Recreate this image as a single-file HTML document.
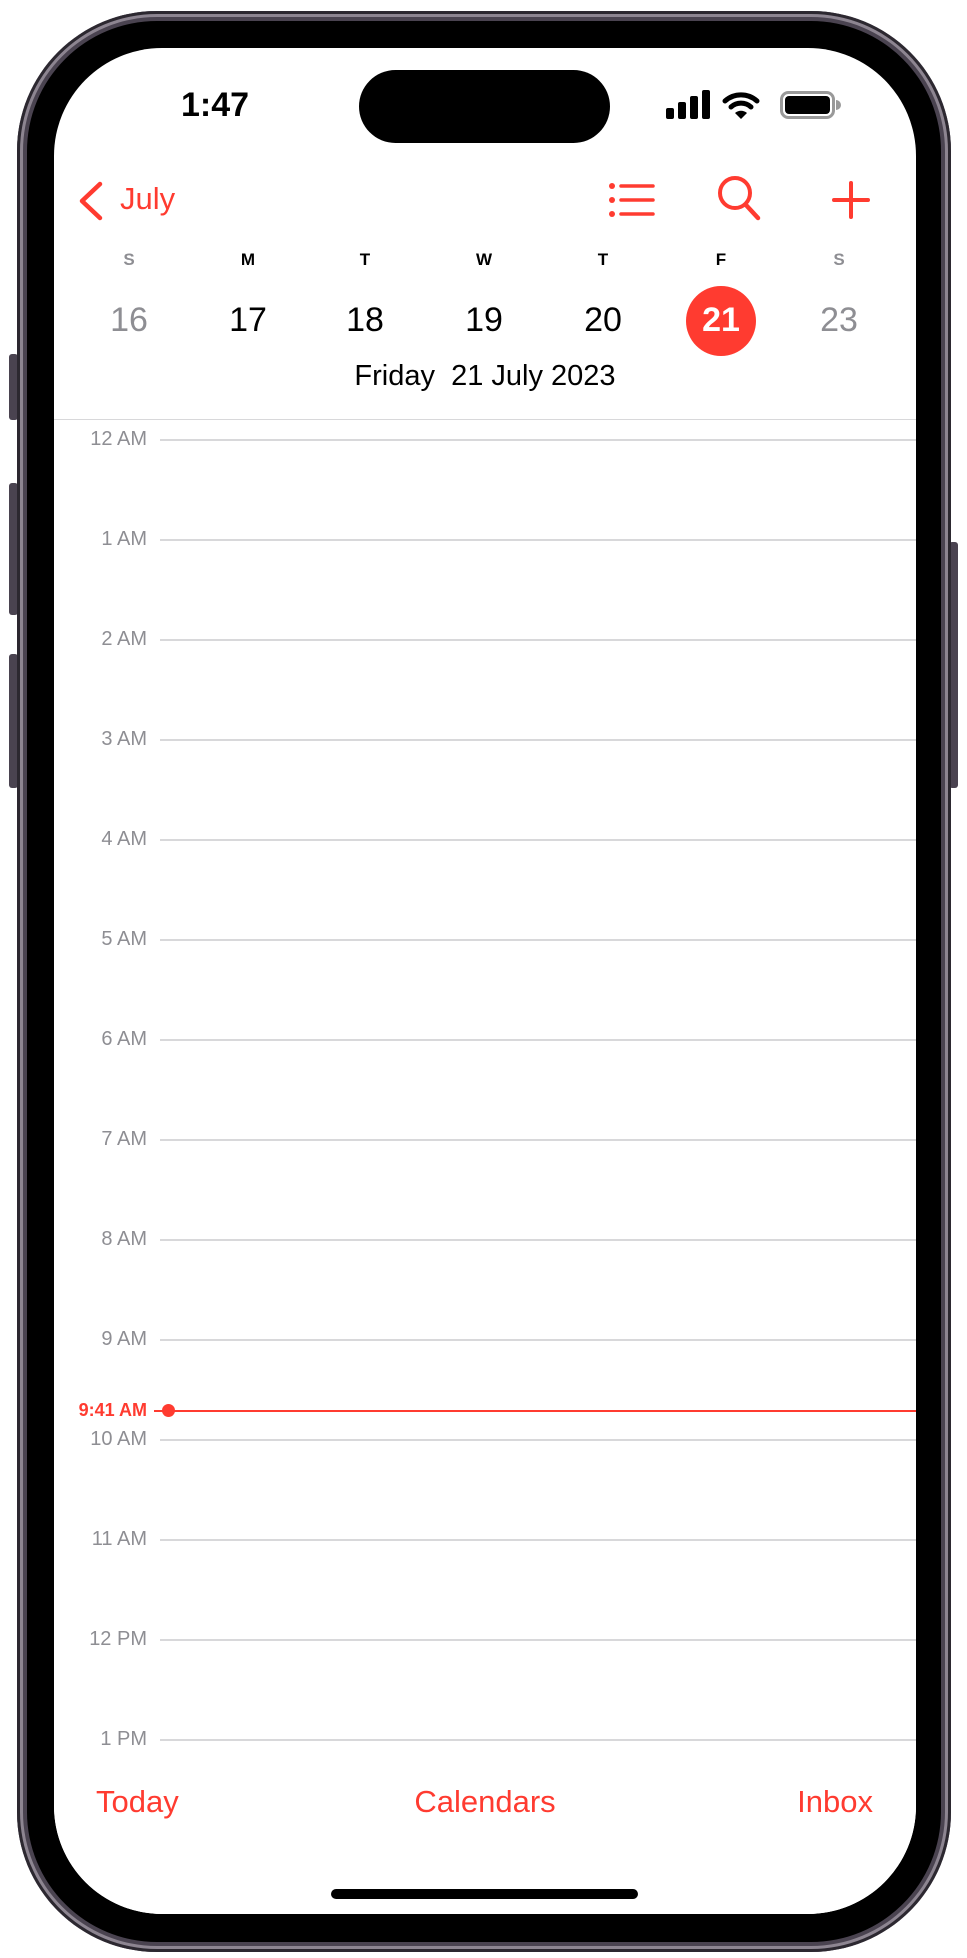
<!DOCTYPE html>
<html><head><meta charset="utf-8"><style>
*{margin:0;padding:0;box-sizing:border-box}
body{width:967px;height:1958px;background:#fff;position:relative;overflow:hidden;font-family:"Liberation Sans",sans-serif}
.abs{position:absolute}
.phone{left:17px;top:11px;width:934px;height:1941px;border-radius:140px;background:#4a4350;box-shadow:inset 0 0 0 3px #2c2830,inset 0 0 0 6px #8d8591}
.bezel{left:27px;top:21px;width:914px;height:1921px;border-radius:130px;background:#000}
.screen{left:54px;top:48px;width:862px;height:1866px;border-radius:108px;background:#fff;overflow:hidden}
.red{color:#ff3b30}
.hl{position:absolute;left:106px;right:0;height:2px;background:#d8d8da}
.lab{position:absolute;right:769px;font-size:20px;color:#8e8e93;text-align:right;white-space:nowrap}
.wd{position:absolute;width:80px;text-align:center;font-size:17px;font-weight:bold;top:202px}
.dn{position:absolute;width:80px;text-align:center;font-size:34px;top:253px}
.btn{background:#4a4350;border-radius:3px}
</style></head><body>
<div class="abs btn" style="left:9px;top:354px;width:9px;height:66px"></div>
<div class="abs btn" style="left:9px;top:483px;width:9px;height:132px"></div>
<div class="abs btn" style="left:9px;top:654px;width:9px;height:134px"></div>
<div class="abs btn" style="left:949px;top:542px;width:9px;height:246px"></div>
<div class="abs phone"></div>
<div class="abs bezel"></div>
<div class="abs screen">
  <div class="abs" style="left:127px;top:38px;font-size:34px;font-weight:bold;color:#000">1:47</div>
  <div class="abs" style="left:305px;top:22px;width:251px;height:73px;border-radius:37px;background:#000"></div>
  <svg class="abs" style="left:610px;top:40px" width="190" height="34" viewBox="0 0 190 34">
    <rect x="2" y="20" width="8" height="11" rx="2"/><rect x="14" y="14" width="8" height="17" rx="2"/><rect x="26" y="8" width="8" height="23" rx="2"/><rect x="38" y="2" width="8" height="29" rx="2"/>
    <path d="M61 13a24 24 0 0 1 32 0" stroke="#000" stroke-width="5" fill="none" stroke-linecap="round"/>
    <path d="M67 19a15 15 0 0 1 20 0" stroke="#000" stroke-width="5" fill="none" stroke-linecap="round"/>
    <path d="M77 31l-6-6a9 9 0 0 1 12 0z"/>
    <rect x="117.5" y="4.5" width="52" height="25" rx="7" fill="none" stroke="#999" stroke-width="3"/>
    <rect x="121" y="8" width="45" height="18" rx="4"/>
    <path d="M172 12v10a4 4 0 0 0 0-10z" fill="#999"/>
  </svg>
  <svg class="abs" style="left:22px;top:132px" width="30" height="42" viewBox="0 0 30 42"><path d="M24 4L6 21l18 17" stroke="#ff3b30" stroke-width="4.5" fill="none" stroke-linecap="round" stroke-linejoin="round"/></svg>
  <div class="abs red" style="left:66px;top:133px;font-size:31px">July</div>
  <svg class="abs" style="left:554px;top:130px" width="48" height="44" viewBox="0 0 48 44"><g fill="#ff3b30"><circle cx="4" cy="8" r="3"/><circle cx="4" cy="22" r="3"/><circle cx="4" cy="36" r="3"/></g><g stroke="#ff3b30" stroke-width="3.5" stroke-linecap="round"><path d="M13 8h32M13 22h32M13 36h32"/></g></svg>
  <svg class="abs" style="left:662px;top:126px" width="48" height="50" viewBox="0 0 48 50"><circle cx="19" cy="19" r="15" stroke="#ff3b30" stroke-width="4" fill="none"/><path d="M30 31l12 13" stroke="#ff3b30" stroke-width="4.5" stroke-linecap="round"/></svg>
  <svg class="abs" style="left:777px;top:132px" width="40" height="40" viewBox="0 0 40 40"><path d="M20 3v34M3 20h34" stroke="#ff3b30" stroke-width="4" stroke-linecap="round"/></svg>
  <div class="wd" style="left:35px;color:#8e8e93">S</div>
  <div class="wd" style="left:154px">M</div>
  <div class="wd" style="left:271px">T</div>
  <div class="wd" style="left:390px">W</div>
  <div class="wd" style="left:509px">T</div>
  <div class="wd" style="left:627px">F</div>
  <div class="wd" style="left:745px;color:#8e8e93">S</div>
  <div class="abs" style="left:632px;top:238px;width:70px;height:70px;border-radius:50%;background:#ff3b30"></div>
  <div class="dn" style="left:35px;color:#8e8e93">16</div>
  <div class="dn" style="left:154px">17</div>
  <div class="dn" style="left:271px">18</div>
  <div class="dn" style="left:390px">19</div>
  <div class="dn" style="left:509px">20</div>
  <div class="dn" style="left:627px;color:#fff;font-weight:bold">21</div>
  <div class="dn" style="left:745px;color:#8e8e93">23</div>
  <div class="abs" style="left:0;width:862px;text-align:center;top:312px;font-size:29px;white-space:pre">Friday  21 July 2023</div>
  <div class="abs" style="left:0;right:0;top:371px;height:1px;background:#d8d8da"></div>

  <div class="hl" style="top:391px"></div><div class="lab" style="top:380px">12 AM</div>
  <div class="hl" style="top:491px"></div><div class="lab" style="top:480px">1 AM</div>
  <div class="hl" style="top:591px"></div><div class="lab" style="top:580px">2 AM</div>
  <div class="hl" style="top:691px"></div><div class="lab" style="top:680px">3 AM</div>
  <div class="hl" style="top:791px"></div><div class="lab" style="top:780px">4 AM</div>
  <div class="hl" style="top:891px"></div><div class="lab" style="top:880px">5 AM</div>
  <div class="hl" style="top:991px"></div><div class="lab" style="top:980px">6 AM</div>
  <div class="hl" style="top:1091px"></div><div class="lab" style="top:1080px">7 AM</div>
  <div class="hl" style="top:1191px"></div><div class="lab" style="top:1180px">8 AM</div>
  <div class="hl" style="top:1291px"></div><div class="lab" style="top:1280px">9 AM</div>
  <div class="hl" style="top:1391px"></div><div class="lab" style="top:1380px">10 AM</div>
  <div class="hl" style="top:1491px"></div><div class="lab" style="top:1480px">11 AM</div>
  <div class="hl" style="top:1591px"></div><div class="lab" style="top:1580px">12 PM</div>
  <div class="hl" style="top:1691px"></div><div class="lab" style="top:1680px">1 PM</div>

  <div class="abs" style="left:100px;right:0;top:1362px;height:2px;background:#ff3b30"></div>
  <div class="abs" style="left:108px;top:1356px;width:13px;height:13px;border-radius:50%;background:#ff3b30"></div>
  <div class="abs red" style="right:769px;top:1352px;font-size:18px;font-weight:bold;white-space:nowrap">9:41 AM</div>

  <div class="abs" style="left:0;right:0;top:1702px;height:170px;background:#fff"></div>
  <div class="abs red" style="left:42px;top:1736px;font-size:31px">Today</div>
  <div class="abs red" style="left:0;width:862px;text-align:center;top:1736px;font-size:31px">Calendars</div>
  <div class="abs red" style="right:43px;top:1736px;font-size:31px">Inbox</div>
  <div class="abs" style="left:277px;top:1841px;width:307px;height:10px;border-radius:5px;background:#000"></div>
</div>
</body></html>
